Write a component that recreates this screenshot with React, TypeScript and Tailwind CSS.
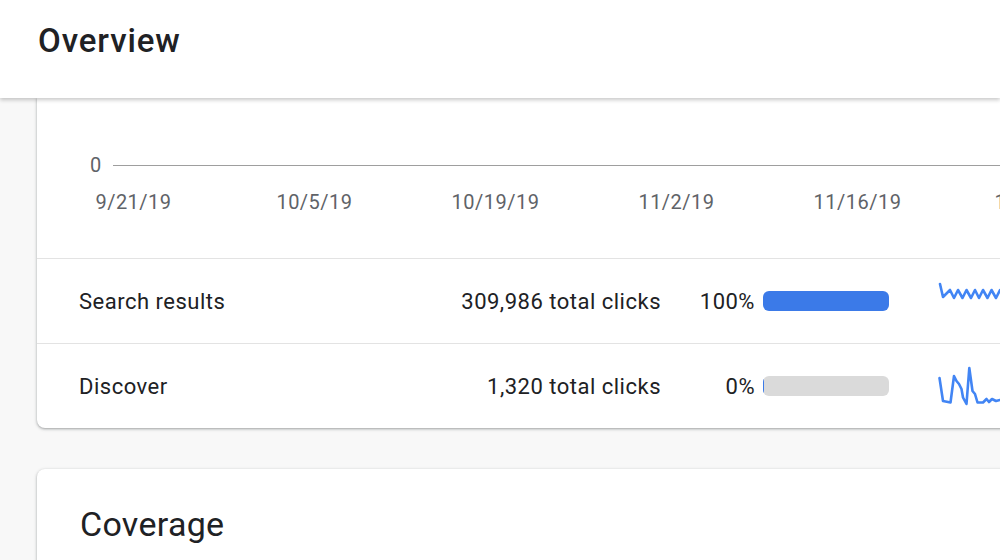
const dates = ["9/21/19", "10/5/19", "10/19/19", "11/2/19", "11/16/19", "11/30/19"];

const rows = [
  {
    label: "Search results",
    clicks: "309,986 total clicks",
    pct: "100%",
    fill: 100,
    spark:
      "2,3 5,16 8,13 12,9 16,17 20,9 24.5,17 28.5,9 33,17 37,9 41,17 45,9 49.5,17 53.5,9 58,17 62,9 66,17 70,9",
  },
  {
    label: "Discover",
    clicks: "1,320 total clicks",
    pct: "0%",
    fill: 0,
    spark:
      "1.5,12 5,35 12.5,36.5 16,10 18.5,15 21,18 23.5,23 25,31.5 28.5,38 31.3,2 34.5,25 37,28 39.5,36.5 45,36.5 48.5,33 51,36 54,33 58,35 62,34 66,35 70,34",
  },
];

function Sparkline({ points }: { points: string }) {
  return (
    <svg width="72" height="40" viewBox="0 0 72 40" className="shrink-0">
      <polyline
        points={points}
        fill="none"
        stroke="#4285f4"
        strokeWidth="2.6"
        strokeLinejoin="round"
        strokeLinecap="round"
      />
    </svg>
  );
}

export default function App() {
  return (
    <div
      className="w-[1000px] h-[560px] overflow-hidden bg-[#f8f8f8] text-[#202124]"
      style={{ fontFamily: "Roboto, 'Liberation Sans', sans-serif" }}
    >
      <header className="relative z-10 h-[98px] bg-white flex items-center pl-[38px] shadow-[0_2px_4px_rgba(0,0,0,0.22)]">
        <h1 className="text-[33px] font-medium tracking-[0.9px] -mt-[16px]">Overview</h1>
      </header>

      <div className="ml-[37px] w-[1000px]">
        {/* performance card */}
        <div className="bg-white rounded-b-lg shadow-[0_1px_2px_rgba(60,64,67,0.3),0_1px_3px_1px_rgba(60,64,67,0.15)]">
          <div className="h-[160px] pt-[55px]">
            <div className="flex items-center h-6 pl-[53px]">
              <span className="text-[20px] text-[#5f6368] leading-none">0</span>
              <div className="flex-1 h-px bg-[#9e9e9e] ml-3" />
            </div>
            <div className="flex pl-[6px] mt-[10px]">
              {dates.map((d) => (
                <div
                  key={d}
                  className="w-[181px] shrink-0 text-center text-[20px] tracking-[0.5px] text-[#5f6368]"
                >
                  {d}
                </div>
              ))}
            </div>
          </div>

          {rows.map((r) => (
            <div
              key={r.label}
              className="h-[85px] border-t border-[#e3e3e3] flex items-center pl-[42px] text-[22px] tracking-[0.5px]"
            >
              <div className="w-[300px] shrink-0">{r.label}</div>
              <div className="w-[282px] shrink-0 text-right">{r.clicks}</div>
              <div className="w-[94px] shrink-0 text-right">{r.pct}</div>
              <div className="ml-2 w-[126px] h-5 rounded-md bg-[#dadada] overflow-hidden shrink-0">
                <div className="h-full bg-[#3b7ae8] min-w-[1px]" style={{ width: `${r.fill}%` }} />
              </div>
              <div className="ml-[49px]">
                <Sparkline points={r.spark} />
              </div>
            </div>
          ))}
        </div>

        {/* coverage card */}
        <div className="mt-[41px] bg-white rounded-t-lg h-[120px] pt-[35px] pl-[43px] shadow-[0_1px_2px_rgba(60,64,67,0.3),0_1px_3px_1px_rgba(60,64,67,0.15)]">
          <h2 className="text-[34px] leading-[40px] tracking-[0.3px]">Coverage</h2>
        </div>
      </div>
    </div>
  );
}
